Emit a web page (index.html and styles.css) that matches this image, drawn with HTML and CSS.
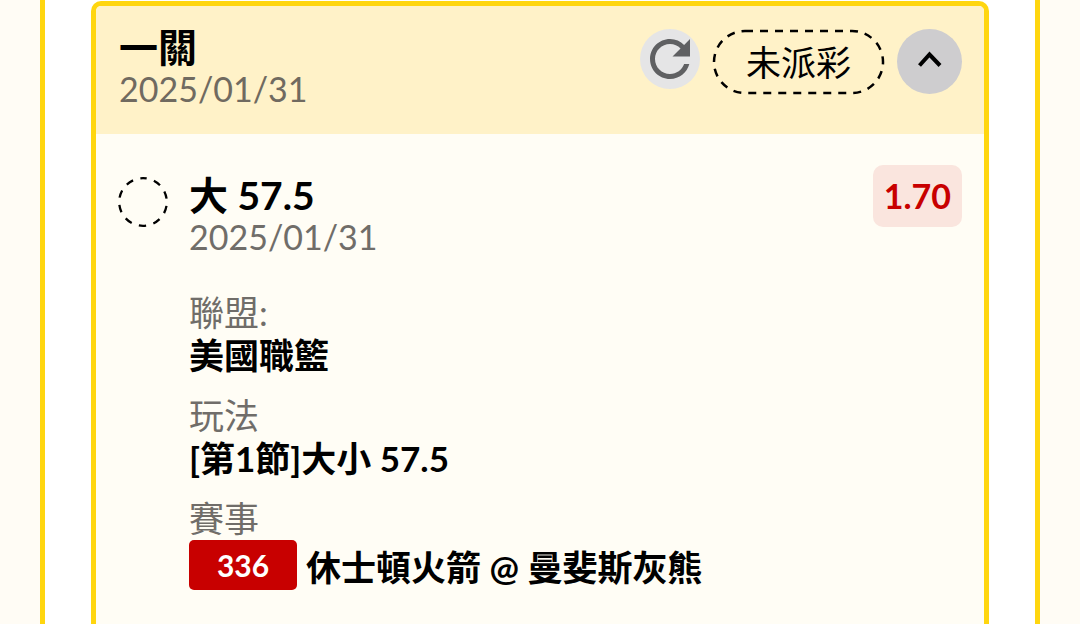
FILE: index.html
```html
<!DOCTYPE html>
<html lang="zh-Hant">
<head>
<meta charset="utf-8">
<meta name="viewport" content="width=device-width, initial-scale=1">
<title>一關</title>
<link rel="stylesheet" href="styles.css">
</head>
<body>
<main class="panel">
  <article class="ticket">
    <header class="ticket-head">
      <div class="heading">
        <h1 class="title">一關</h1>
        <time class="date" datetime="2025-01-31">2025/01/31</time>
      </div>
      <div class="actions">
        <button class="round refresh" type="button" aria-label="重新整理">
          <svg width="60" height="60" viewBox="0 0 24 24" aria-hidden="true">
            <path d="M17.650 6.350C16.200 4.900 14.210 4 12 4c-4.420 0-7.990 3.580-7.990 8s3.570 8 7.990 8c3.730 0 6.840-2.550 7.730-6h-2.080c-.82 2.330-3.040 4-5.650 4-3.310 0-6-2.690-6-6s2.690-6 6-6c1.660 0 3.140.69 4.220 1.780L13 11h7V4l-2.350 2.350z" fill="#5f6062"/>
          </svg>
        </button>
        <span class="status">
          <svg class="outline" aria-hidden="true"><rect class="outline-shape" x="2" y="2" rx="31"/></svg>
          未派彩
        </span>
        <button class="round toggle" type="button" aria-label="收合" aria-expanded="true">
          <svg width="65" height="65" viewBox="0 0 65 65" aria-hidden="true">
            <path d="M22.500 36.500L32.500 25.500L43 36.500" fill="none" stroke="#000" stroke-width="4"/>
          </svg>
        </button>
      </div>
    </header>
    <section class="bet">
      <svg class="pending" width="50" height="50" viewBox="0 0 50 50" aria-hidden="true">
        <circle cx="25" cy="25" r="23.800" fill="none" stroke="#000" stroke-width="2.300" stroke-dasharray="7.500 7.454" stroke-dashoffset="3.700" transform="rotate(-90 25 25)"/>
      </svg>
      <div class="info">
        <h2 class="title">大 57.5</h2>
        <time class="date" datetime="2025-01-31">2025/01/31</time>
        <dl class="details">
          <div>
            <dt>聯盟:</dt>
            <dd>美國職籃</dd>
          </div>
          <div>
            <dt>玩法</dt>
            <dd>[第1節]大小 57.5</dd>
          </div>
          <div>
            <dt>賽事</dt>
            <dd class="match"><span class="code">336</span><span class="teams">休士頓火箭 @ 曼斐斯灰熊</span></dd>
          </div>
        </dl>
      </div>
      <strong class="odds">1.70</strong>
    </section>
  </article>
</main>
</body>
</html>
```
FILE: styles.css
```css
* {
  box-sizing: border-box;
}

body {
  margin: 0;
  background: #fffcf5;
  color: #000;
  font-family: Lato, "Noto Sans CJK TC", sans-serif;
  font-size: 35px;
  line-height: 43px;
}

.panel {
  min-height: 100vh;
  margin: 0 40px;
  padding: 1px 46px 0;
  background: #fff;
  border: solid #ffd60f;
  border-width: 0 5px;
  display: flex;
}

.ticket {
  flex: 1;
  background: #fffdf5;
  border: 5px solid #ffd60f;
  border-bottom: 0;
  border-radius: 10px 10px 0 0;
  overflow: hidden;
}

.ticket-head {
  display: flex;
  justify-content: space-between;
  align-items: flex-start;
  padding: 20px 22px 20px 23px;
  background: #fff2c8;
}

.heading {
  display: flex;
  flex-direction: column;
  padding-bottom: 4px;
}

.title {
  margin: 0;
  font-size: 39px;
  font-weight: 700;
  line-height: 42px;
}

.date {
  color: #706a60;
  font-size: 34px;
  line-height: 42px;
}

.info .date {
  color: #706d69;
}

.actions {
  display: flex;
  align-items: flex-start;
  gap: 12px;
  padding-top: 3px;
}

.round {
  padding: 0;
  border: 0;
  border-radius: 50%;
  cursor: pointer;
}

.round svg {
  display: block;
}

.refresh {
  background: #e5e5e6;
}

.toggle {
  background: #cecdcf;
}

.status {
  position: relative;
  padding: 12px 34px;
  line-height: 42px;
}

.outline {
  position: absolute;
  inset: 0;
  width: 100%;
  height: 100%;
}

.outline-shape {
  width: calc(100% - 4px);
  height: calc(100% - 4px);
  fill: none;
  stroke: #000;
  stroke-width: 2.5px;
  stroke-dasharray: 8px 7px;
}

.bet {
  display: flex;
  align-items: flex-start;
  padding: 31px 22px 32px;
}

.pending {
  flex: none;
  margin-top: 12px;
}

.info {
  flex: 1;
  display: flex;
  flex-direction: column;
  padding: 9px 0 0 21px;
}

.details {
  display: flex;
  flex-direction: column;
  gap: 17px;
  margin: 33px 0 0;
}

.details dt {
  color: #706d69;
}

.details dd {
  margin: 0;
  font-weight: 700;
}

.details .match {
  display: flex;
  align-items: center;
  gap: 9px;
}

.code {
  min-width: 108px;
  border-radius: 5px;
  background: #c80000;
  color: #fff;
  font-size: 30px;
  line-height: 50px;
  text-align: center;
}

.teams {
  padding-top: 4px;
}

.odds {
  padding: 10px 11px;
  border-radius: 10px;
  background: #fae5de;
  color: #c80000;
  font-size: 34px;
  font-weight: 700;
  line-height: 42px;
}
```
